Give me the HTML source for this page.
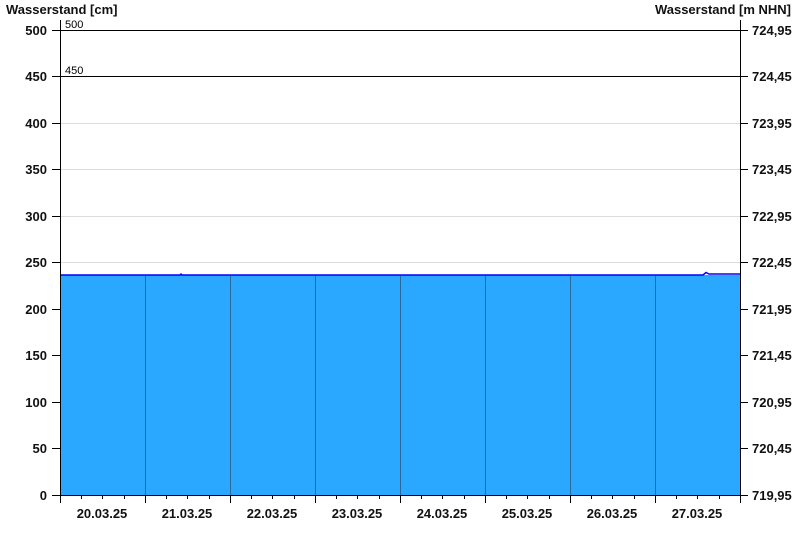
<!DOCTYPE html>
<html><head><meta charset="utf-8"><style>
html,body{margin:0;padding:0;background:#fff;}
svg{display:block;font-family:"Liberation Sans",Arial,sans-serif;}
</style></head><body>
<svg width="800" height="550" viewBox="0 0 800 550" xmlns="http://www.w3.org/2000/svg">
<rect width="800" height="550" fill="#fff"/>
<g font-weight="bold" font-size="13" fill="#111">
<text x="6" y="14">Wasserstand [cm]</text>
<text x="791" y="14" text-anchor="end">Wasserstand [m NHN]</text>
</g>
<!-- grid -->
<g stroke="#dcdcdc" stroke-width="1">
<line x1="60" y1="123.5" x2="740" y2="123.5"/>
<line x1="60" y1="169.5" x2="740" y2="169.5"/>
<line x1="60" y1="216.5" x2="740" y2="216.5"/>
<line x1="60" y1="262.5" x2="740" y2="262.5"/>
</g>
<g stroke="#000" stroke-width="1">
<line x1="60" y1="30.5" x2="740" y2="30.5"/>
<line x1="60" y1="76.5" x2="740" y2="76.5"/>
</g>
<g font-size="11" fill="#000">
<text x="65" y="28">500</text>
<text x="65" y="74">450</text>
</g>
<!-- fill -->
<rect x="60" y="275" width="680" height="220" fill="#2aa8ff"/>
<polyline points="60,275 180,275 181,274 182,275 703,275 706,272.5 709,274 740,274" fill="none" stroke="#0000ff" stroke-width="1.5"/>
<g stroke="#2a6a9a" stroke-width="1">
<line x1="145.5" y1="276" x2="145.5" y2="495"/>
<line x1="230.5" y1="276" x2="230.5" y2="495"/>
<line x1="315.5" y1="276" x2="315.5" y2="495"/>
<line x1="400.5" y1="276" x2="400.5" y2="495"/>
<line x1="485.5" y1="276" x2="485.5" y2="495"/>
<line x1="570.5" y1="276" x2="570.5" y2="495"/>
<line x1="655.5" y1="276" x2="655.5" y2="495"/>
</g>
<!-- axes -->
<g stroke="#000" stroke-width="1">
<line x1="60.5" y1="20" x2="60.5" y2="503"/>
<line x1="740.5" y1="20" x2="740.5" y2="495"/>
<line x1="52" y1="495.5" x2="740" y2="495.5"/>
<line x1="52" y1="30.5" x2="60" y2="30.5"/><line x1="52" y1="76.5" x2="60" y2="76.5"/>
<line x1="52" y1="123.5" x2="60" y2="123.5"/><line x1="52" y1="169.5" x2="60" y2="169.5"/>
<line x1="52" y1="216.5" x2="60" y2="216.5"/><line x1="52" y1="262.5" x2="60" y2="262.5"/>
<line x1="52" y1="309.5" x2="60" y2="309.5"/><line x1="52" y1="355.5" x2="60" y2="355.5"/>
<line x1="52" y1="402.5" x2="60" y2="402.5"/><line x1="52" y1="448.5" x2="60" y2="448.5"/>
<line x1="740" y1="30.5" x2="748" y2="30.5"/><line x1="740" y1="76.5" x2="748" y2="76.5"/>
<line x1="740" y1="123.5" x2="748" y2="123.5"/><line x1="740" y1="169.5" x2="748" y2="169.5"/>
<line x1="740" y1="216.5" x2="748" y2="216.5"/><line x1="740" y1="262.5" x2="748" y2="262.5"/>
<line x1="740" y1="309.5" x2="748" y2="309.5"/><line x1="740" y1="355.5" x2="748" y2="355.5"/>
<line x1="740" y1="402.5" x2="748" y2="402.5"/><line x1="740" y1="448.5" x2="748" y2="448.5"/>
<line x1="740" y1="495.5" x2="748" y2="495.5"/>
</g>
<g stroke="#000" stroke-width="1" id="xt"></g>
<g font-weight="bold" font-size="13" fill="#111" text-anchor="end">
<text x="47" y="35">500</text><text x="47" y="81">450</text><text x="47" y="128">400</text>
<text x="47" y="174">350</text><text x="47" y="221">300</text><text x="47" y="267">250</text>
<text x="47" y="314">200</text><text x="47" y="360">150</text><text x="47" y="407">100</text>
<text x="47" y="453">50</text><text x="47" y="500">0</text>
</g>
<g font-weight="bold" font-size="13" fill="#111">
<text x="752" y="35">724,95</text><text x="752" y="81">724,45</text><text x="752" y="128">723,95</text>
<text x="752" y="174">723,45</text><text x="752" y="221">722,95</text><text x="752" y="267">722,45</text>
<text x="752" y="314">721,95</text><text x="752" y="360">721,45</text><text x="752" y="407">720,95</text>
<text x="752" y="453">720,45</text><text x="752" y="500">719,95</text>
</g>
<g font-weight="bold" font-size="13" fill="#111" text-anchor="middle">
<text x="102" y="518">20.03.25</text><text x="187" y="518">21.03.25</text><text x="272" y="518">22.03.25</text>
<text x="357" y="518">23.03.25</text><text x="442" y="518">24.03.25</text><text x="527" y="518">25.03.25</text>
<text x="612" y="518">26.03.25</text><text x="697" y="518">27.03.25</text>
</g>
<g stroke="#000" stroke-width="1">
<path d="M60.5 495V503M145.5 495V503M230.5 495V503M315.5 495V503M400.5 495V503M485.5 495V503M570.5 495V503M655.5 495V503M740.5 495V503
M81.5 495V499M102.5 495V499M124.5 495V499
M166.5 495V499M187.5 495V499M209.5 495V499
M251.5 495V499M272.5 495V499M294.5 495V499
M336.5 495V499M357.5 495V499M379.5 495V499
M421.5 495V499M442.5 495V499M464.5 495V499
M506.5 495V499M527.5 495V499M549.5 495V499
M591.5 495V499M612.5 495V499M634.5 495V499
M676.5 495V499M697.5 495V499M719.5 495V499"/>
</g>
</svg>
</body></html>
